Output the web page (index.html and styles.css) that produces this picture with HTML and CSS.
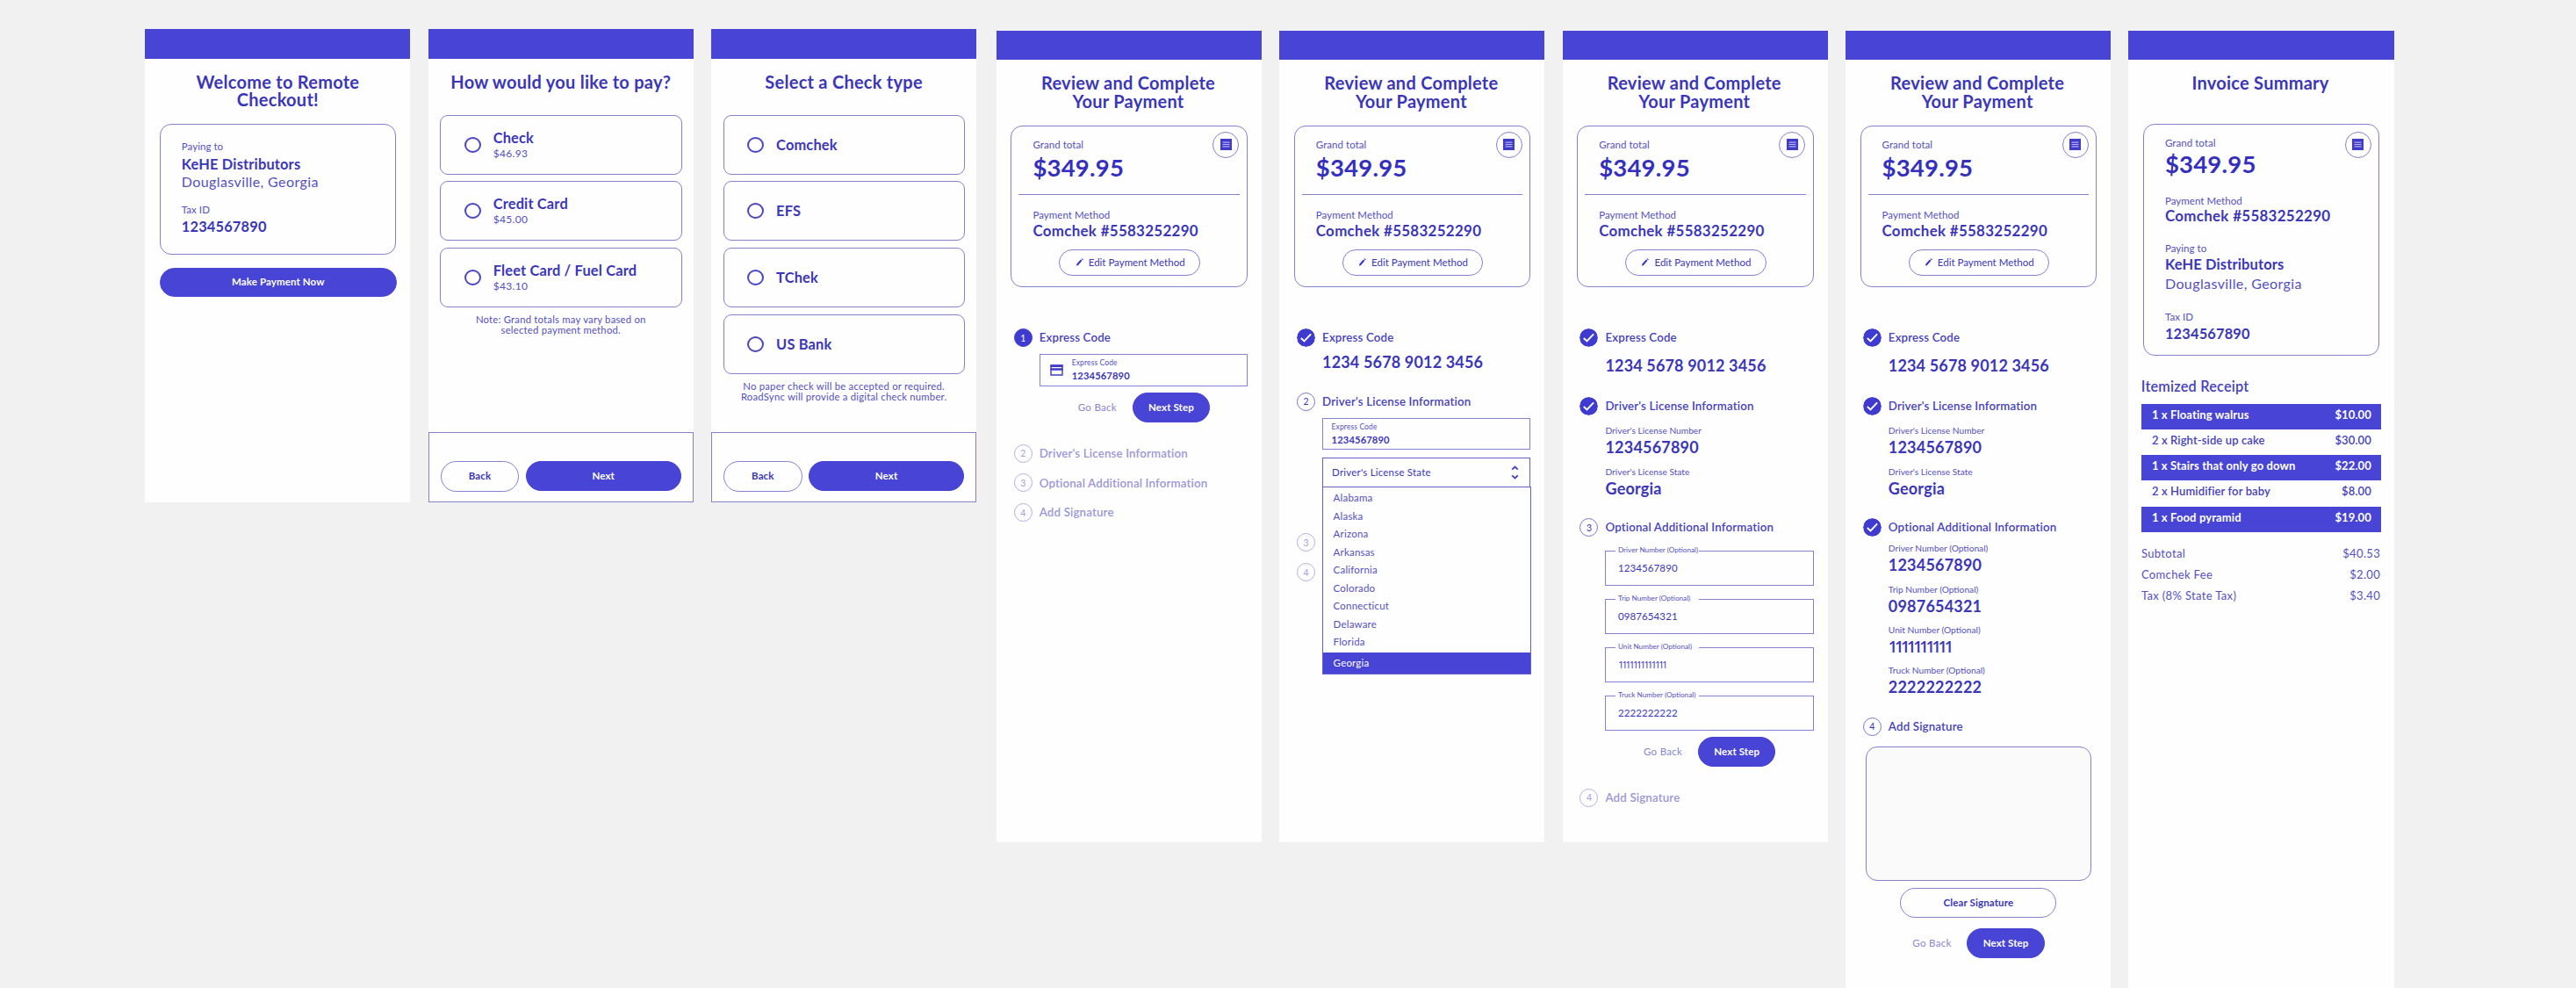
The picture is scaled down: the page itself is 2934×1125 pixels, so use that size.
FILE: index.html
```html
<!DOCTYPE html>
<html lang="en">
<head>
<meta charset="utf-8">
<title>Remote Checkout</title>
<link rel="stylesheet" href="styles.css">
</head>
<body>
<svg class="defs" aria-hidden="true">
  <symbol id="i-check" viewBox="0 0 21 21"><circle cx="10.5" cy="10.5" r="10.5" fill="#403bd0"/><path d="M4.800 11l3.700 3.500 7.600-8.200" fill="none" stroke="#fff" stroke-width="1.900"/></symbol>
  <symbol id="i-receipt" viewBox="0 0 13 13"><path d="M0 0h13v13H0z" fill="#403bc8"/><path d="M2.500 4.200h8M2.500 6.500h8M2.500 8.800h8" stroke="#b4b0ee" stroke-width="1.200"/></symbol>
  <symbol id="i-pencil" viewBox="0 0 9 10"><path d="M0 9.800l.5-2.500 5-5.800L7.300 3l-5 5.900zM6.100.9l.8-.8L9 1.700l-.9.900z" fill="#3a35c4"/></symbol>
  <symbol id="i-card" viewBox="0 0 15 13"><path d="M1 1h13v11H1z" fill="none" stroke="#403bc8" stroke-width="1.400"/><path d="M.5.500h14V3H.5zM.5 4.200h14v2.600H.5z" fill="#403bc8"/></symbol>
  <symbol id="i-sort" viewBox="0 0 9 16"><path d="M1.200 4.600l3.300-3 3.300 3M1.200 11.400l3.300 3 3.300-3" fill="none" stroke="#4540c4" stroke-width="1.900"/></symbol>
</svg>
<main class="board">

  <section class="screen short">
    <div class="bar"></div>
    <h1 class="title">Welcome to Remote<br>Checkout!</h1>
    <div class="card payee">
      <p class="label">Paying to</p>
      <p class="value name">KeHE Distributors</p>
      <p class="value place">Douglasville, Georgia</p>
      <p class="label tax">Tax ID</p>
      <p class="value taxno">1234567890</p>
    </div>
    <button class="btn solid wide">Make Payment Now</button>
  </section>

  <section class="screen short">
    <div class="bar"></div>
    <h1 class="title">How would you like to pay?</h1>
    <div class="options">
      <div class="option"><i class="radio"></i><div><p class="value">Check</p><p class="price">$46.93</p></div></div>
      <div class="option"><i class="radio"></i><div><p class="value">Credit Card</p><p class="price">$45.00</p></div></div>
      <div class="option"><i class="radio"></i><div><p class="value">Fleet Card / Fuel Card</p><p class="price">$43.10</p></div></div>
    </div>
    <p class="note">Note: Grand totals may vary based on<br>selected payment method.</p>
    <div class="footer"><button class="btn line back">Back</button><button class="btn solid next">Next</button></div>
  </section>

  <section class="screen short">
    <div class="bar"></div>
    <h1 class="title">Select a Check type</h1>
    <div class="options">
      <div class="option"><i class="radio"></i><p class="value">Comchek</p></div>
      <div class="option"><i class="radio"></i><p class="value">EFS</p></div>
      <div class="option"><i class="radio"></i><p class="value">TChek</p></div>
      <div class="option"><i class="radio"></i><p class="value">US Bank</p></div>
    </div>
    <p class="note">No paper check will be accepted or required.<br>RoadSync will provide a digital check number.</p>
    <div class="footer"><button class="btn line back">Back</button><button class="btn solid next">Next</button></div>
  </section>

  <section class="screen mid first">
    <div class="bar"></div>
    <h1 class="title">Review and Complete<br>Your Payment</h1>
    <div class="card total">
      <span class="receipt"><svg><use href="#i-receipt"/></svg></span>
      <p class="label">Grand total</p>
      <p class="amount">$349.95</p>
      <hr>
      <p class="label">Payment Method</p>
      <p class="value method">Comchek #5583252290</p>
      <button class="btn line edit"><svg><use href="#i-pencil"/></svg>Edit Payment Method</button>
    </div>
    <div class="steps">
      <div class="step"><b class="num on">1</b><h2>Express Code</h2></div>
      <div class="body">
        <div class="field icon"><svg><use href="#i-card"/></svg><div><p class="tiny">Express Code</p><p class="entry">1234567890</p></div></div>
      </div>
      <div class="actions"><a class="goback">Go Back</a><button class="btn solid go">Next Step</button></div>
      <div class="step idle after"><b class="num">2</b><h2>Driver's License Information</h2></div>
      <div class="step idle"><b class="num">3</b><h2>Optional Additional Information</h2></div>
      <div class="step idle"><b class="num">4</b><h2>Add Signature</h2></div>
    </div>
  </section>

  <section class="screen mid">
    <div class="bar"></div>
    <h1 class="title">Review and Complete<br>Your Payment</h1>
    <div class="card total">
      <span class="receipt"><svg><use href="#i-receipt"/></svg></span>
      <p class="label">Grand total</p>
      <p class="amount">$349.95</p>
      <hr>
      <p class="label">Payment Method</p>
      <p class="value method">Comchek #5583252290</p>
      <button class="btn line edit"><svg><use href="#i-pencil"/></svg>Edit Payment Method</button>
    </div>
    <div class="steps">
      <div class="step"><svg class="num done"><use href="#i-check"/></svg><h2>Express Code</h2></div>
      <p class="code near">1234 5678 9012 3456</p>
      <div class="step second"><b class="num">2</b><h2>Driver's License Information</h2></div>
      <div class="body">
        <div class="field"><div><p class="tiny">Express Code</p><p class="entry">1234567890</p></div></div>
        <div class="select">
          <span>Driver's License State</span><svg><use href="#i-sort"/></svg>
          <ul class="menu">
            <li>Alabama</li><li>Alaska</li><li>Arizona</li><li>Arkansas</li><li>California</li><li>Colorado</li><li>Connecticut</li><li>Delaware</li><li>Florida</li><li class="picked">Georgia</li>
          </ul>
        </div>
      </div>
      <div class="step idle beneath"><b class="num">3</b></div>
      <div class="step idle"><b class="num">4</b></div>
    </div>
  </section>

  <section class="screen mid">
    <div class="bar"></div>
    <h1 class="title">Review and Complete<br>Your Payment</h1>
    <div class="card total">
      <span class="receipt"><svg><use href="#i-receipt"/></svg></span>
      <p class="label">Grand total</p>
      <p class="amount">$349.95</p>
      <hr>
      <p class="label">Payment Method</p>
      <p class="value method">Comchek #5583252290</p>
      <button class="btn line edit"><svg><use href="#i-pencil"/></svg>Edit Payment Method</button>
    </div>
    <div class="steps">
      <div class="step"><svg class="num done"><use href="#i-check"/></svg><h2>Express Code</h2></div>
      <p class="code">1234 5678 9012 3456</p>
      <div class="step third"><svg class="num done"><use href="#i-check"/></svg><h2>Driver's License Information</h2></div>
      <dl class="facts">
        <dt>Driver's License Number</dt><dd>1234567890</dd>
        <dt>Driver's License State</dt><dd>Georgia</dd>
      </dl>
      <div class="step third"><b class="num">3</b><h2>Optional Additional Information</h2></div>
      <div class="outlined">
        <div class="box"><span class="legend">Driver Number (Optional)</span><p>1234567890</p></div>
        <div class="box"><span class="legend">Trip Number (Optional)</span><p>0987654321</p></div>
        <div class="box"><span class="legend">Unit Number (Optional)</span><p class="ones">1111111111111</p></div>
        <div class="box"><span class="legend">Truck Number (Optional)</span><p>2222222222</p></div>
      </div>
      <div class="actions left"><a class="goback">Go Back</a><button class="btn solid go">Next Step</button></div>
      <div class="step idle after"><b class="num">4</b><h2>Add Signature</h2></div>
    </div>
  </section>

  <section class="screen tall">
    <div class="bar"></div>
    <h1 class="title">Review and Complete<br>Your Payment</h1>
    <div class="card total">
      <span class="receipt"><svg><use href="#i-receipt"/></svg></span>
      <p class="label">Grand total</p>
      <p class="amount">$349.95</p>
      <hr>
      <p class="label">Payment Method</p>
      <p class="value method">Comchek #5583252290</p>
      <button class="btn line edit"><svg><use href="#i-pencil"/></svg>Edit Payment Method</button>
    </div>
    <div class="steps">
      <div class="step"><svg class="num done"><use href="#i-check"/></svg><h2>Express Code</h2></div>
      <p class="code">1234 5678 9012 3456</p>
      <div class="step third"><svg class="num done"><use href="#i-check"/></svg><h2>Driver's License Information</h2></div>
      <dl class="facts">
        <dt>Driver's License Number</dt><dd>1234567890</dd>
        <dt>Driver's License State</dt><dd>Georgia</dd>
      </dl>
      <div class="step third"><svg class="num done"><use href="#i-check"/></svg><h2>Optional Additional Information</h2></div>
      <dl class="facts tight">
        <dt>Driver Number (Optional)</dt><dd>1234567890</dd>
        <dt>Trip Number (Optional)</dt><dd>0987654321</dd>
        <dt>Unit Number (Optional)</dt><dd class="ones">1111111111</dd>
        <dt>Truck Number (Optional)</dt><dd>2222222222</dd>
      </dl>
      <div class="step third"><b class="num">4</b><h2>Add Signature</h2></div>
      <div class="pad"></div>
      <button class="btn line clear">Clear Signature</button>
      <div class="actions last"><a class="goback">Go Back</a><button class="btn solid go">Next Step</button></div>
    </div>
  </section>

  <section class="screen tall">
    <div class="bar"></div>
    <h1 class="title">Invoice Summary</h1>
    <div class="card invoice">
      <span class="receipt"><svg><use href="#i-receipt"/></svg></span>
      <p class="label">Grand total</p>
      <p class="amount">$349.95</p>
      <p class="label">Payment Method</p>
      <p class="value method">Comchek #5583252290</p>
      <p class="label">Paying to</p>
      <p class="value name">KeHE Distributors</p>
      <p class="value place">Douglasville, Georgia</p>
      <p class="label tax">Tax ID</p>
      <p class="value taxno">1234567890</p>
    </div>
    <h3 class="subhead">Itemized Receipt</h3>
    <ul class="items">
      <li><span>1 x Floating walrus</span><span>$10.00</span></li>
      <li><span>2 x Right-side up cake</span><span>$30.00</span></li>
      <li><span>1 x Stairs that only go down</span><span>$22.00</span></li>
      <li><span>2 x Humidifier for baby</span><span>$8.00</span></li>
      <li><span>1 x Food pyramid</span><span>$19.00</span></li>
    </ul>
    <ul class="sums">
      <li><span>Subtotal</span><span>$40.53</span></li>
      <li><span>Comchek Fee</span><span>$2.00</span></li>
      <li><span>Tax (8% State Tax)</span><span>$3.40</span></li>
    </ul>
  </section>

</main>
</body>
</html>
```
FILE: styles.css
```css
:root {
  --brand: #4744d6;
  --ink: #3b36b8;
  --soft: #5550c0;
  --edge: #8580cf;
}
* { box-sizing: border-box; margin: 0; padding: 0; }
body {
  height: 1125px;
  overflow: hidden;
  background: #f1f1f1;
  color: var(--ink);
  font-family: Lato, "Open Sans", sans-serif;
}
ul { list-style: none; }
button { font-family: inherit; }
svg { display: block; flex: none; }
.defs { position: absolute; width: 0; height: 0; }

.board {
  display: flex;
  align-items: flex-start;
  gap: 20.2px;
  padding: 33px 0 0 165.3px;
}
.screen {
  display: flex;
  flex-direction: column;
  flex: none;
  width: 302.2px;
  background: #fefefe;
}
.short { height: 539px; }
.mid { height: 924.5px; margin-top: 1.5px; }
.tall { height: 1090.5px; margin-top: 1.5px; }
.first { margin-left: 2.500px; }
.mid .title, .tall .title { margin-left: -2px; }
.bar { flex: none; height: 33.7px; background: var(--brand); }

.title {
  min-height: 40.6px;
  margin: 16.300px 0 0;
  font-size: 20px;
  line-height: 20.3px;
  font-weight: 700;
  letter-spacing: .26px;
  text-align: center;
}

/* text styles */
.label { font-size: 11.5px; line-height: 16px; letter-spacing: .05px; color: var(--soft); }
.value { font-size: 16.4px; line-height: 20px; font-weight: 700; letter-spacing: .17px; white-space: nowrap; }
.place { font-size: 16px; font-weight: 400; letter-spacing: .4px; color: var(--soft); }
.method { font-size: 16.9px; letter-spacing: .32px; }
.amount { font-size: 27.500px; line-height: 30px; font-weight: 700; letter-spacing: .2px; color: #342fbe; }

/* buttons */
.btn {
  display: flex;
  align-items: center;
  justify-content: center;
  flex: none;
  border: 1.5px solid var(--edge);
  border-radius: 18px;
  background: #fefefe;
  color: var(--ink);
  font-size: 11.500px;
  font-weight: 700;
  letter-spacing: .12px;
  padding-bottom: 1px;
}
.solid { background: var(--brand); border-color: var(--brand); color: #fff; }
.wide { width: 270px; height: 33px; margin: 14.500px 0 0 16.500px; }
.footer {
  display: flex;
  gap: 7.500px;
  height: 80px;
  margin-top: auto;
  padding: 32px 12.500px 0 13px;
  border: 1.5px solid var(--edge);
}
.back { width: 89.500px; height: 34.500px; }
.next { width: 177px; height: 34px; }

/* cards */
.card {
  position: relative;
  flex: none;
  width: 269.500px;
  margin-left: 16.500px;
  padding-left: 24px;
  border: 1.5px solid var(--edge);
  border-radius: 13px;
}
.payee { height: 149.500px; margin-top: 17px; padding-top: 17.500px; }
.payee .name { margin-top: 2px; }
.payee .tax { margin-top: 13.500px; }
.payee .taxno { margin-top: 1px; }

.total { height: 184.800px; margin-top: 17.500px; padding-top: 13px; }
.total .amount { margin-top: 3.500px; }
.total hr { width: 251.500px; height: 1.500px; margin: 14.500px 0 14.500px -16px; border: 0; background: var(--edge); }
.edit { width: 160.500px; height: 30px; margin: 11.500px 0 0 30px; gap: 6px; padding-left: 2px; font-weight: 400; letter-spacing: 0; }
.edit svg { width: 8px; height: 9px; }
.receipt {
  position: absolute;
  top: 6px;
  right: 8.500px;
  display: grid;
  place-items: center;
  width: 30px;
  height: 30px;
  border: 1.5px solid var(--edge);
  border-radius: 50%;
}
.receipt svg { width: 13px; height: 13px; }

.invoice { height: 264px; margin-top: 16px; padding-top: 12.500px; }
.invoice .receipt { top: 7.500px; }
.invoice .amount { margin: 1px 0 19.500px; }
.invoice .method { margin: -1.500px 0 19px; }
.invoice .name { margin: .5px 0 1.500px; }
.invoice .tax { margin-top: 20px; }
.invoice .taxno { margin-top: 1px; }

/* payment choices */
.options { display: grid; gap: 7.700px; margin: 7.300px 13px 0 13.500px; }
.option {
  display: flex;
  align-items: center;
  gap: 14px;
  height: 67.900px;
  padding-left: 26.500px;
  border: 1.5px solid var(--edge);
  border-radius: 9px;
}
.radio { width: 19px; height: 18px; border: 2px solid #4a45c4; border-radius: 50%; }
.price { font-size: 12px; line-height: 16px; letter-spacing: .35px; color: var(--soft); }
.note { margin-top: 8px; font-size: 11.3px; line-height: 12px; letter-spacing: .22px; text-align: center; color: var(--soft); white-space: nowrap; }

/* checkout steps */
.steps { padding: 46.700px 16px 0 19.800px; }
.step { display: flex; align-items: center; gap: 8px; height: 21px; }
.step h2 { font-size: 13.3px; line-height: 18px; padding-bottom: .5px; font-weight: 600; letter-spacing: .16px; color: #4641bc; white-space: nowrap; }
.num {
  flex: none;
  display: grid;
  place-items: center;
  width: 21px;
  height: 21px;
  border: 1.4px solid #7a75cb;
  border-radius: 50%;
  font-size: 10.500px;
  font-weight: 400;
}
.on { background: #403bd0; border-color: #403bd0; color: #fff; }
.done { border: 0; }
.idle { margin-top: 12.800px; }
.idle h2 { color: #9a96d8; }
.idle .num { border-color: #b3b0e2; color: #a4a0dc; }
.after { margin-top: 24.800px; }
.second { margin-top: 22.500px; }
.third { margin-top: 23.500px; }
.beneath { margin-top: 51.800px; }
.body { margin: 8.100px 0 0 29px; }
.field {
  display: flex;
  align-items: center;
  height: 36.500px;
  padding-left: 9.500px;
  border: 1.5px solid var(--edge);
}
.icon { padding-left: 11px; gap: 10px; }
.icon svg { width: 15px; height: 13px; }
.tiny { font-size: 8.5px; line-height: 13px; letter-spacing: .12px; color: var(--soft); }
.entry { font-size: 11.2px; line-height: 15px; font-weight: 700; letter-spacing: .12px; }
.actions { display: flex; align-items: center; margin-top: 7.500px; padding-left: 73px; }
.goback { width: 62px; padding-bottom: 1px; font-size: 11.5px; letter-spacing: .3px; color: #8a86d0; }
.go { width: 88.500px; height: 33.600px; }

.select {
  position: relative;
  display: flex;
  align-items: center;
  justify-content: space-between;
  height: 35px;
  margin-top: 8.200px;
  padding: 0 12px 1px 10px;
  border: 1.5px solid #6560c8;
  font-size: 11.500px;
  letter-spacing: .2px;
}
.select svg { width: 9px; height: 16px; }
.menu {
  position: absolute;
  top: 32.500px;
  left: -1.500px;
  right: -1.500px;
  padding-top: 2px;
  border: 1.5px solid #6560c8;
  background: #fefefe;
  color: var(--soft);
}
.menu li { height: 20.500px; padding-left: 12px; line-height: 20.500px; }
.menu .picked { height: 24px; margin-top: 1.500px; line-height: 23px; background: var(--brand); color: #fff; }

.code { margin: 9.300px 0 0 29px; font-size: 18px; line-height: 24px; font-weight: 700; letter-spacing: .15px; }
.near { margin-top: 5.300px; }
.facts { display: flex; flex-direction: column; margin: 10.200px 0 0 29px; }
.facts dt { font-size: 10.2px; line-height: 14px; color: var(--soft); }
.facts dd { margin: 1.200px 0 9.300px; font-size: 18px; line-height: 22px; font-weight: 700; letter-spacing: .2px; }
.facts dd:last-child { margin-bottom: 0; }
.tight { margin-top: 6px; }
.tight dd { margin-bottom: 9.100px; }
.facts .ones { font-family: "Open Sans", sans-serif; letter-spacing: -3.2px; font-weight: 600; }

.outlined { display: grid; gap: 14.800px; margin: 16.200px 0 0 29px; }
.box { position: relative; height: 40px; padding-left: 13.500px; border: 1.5px solid var(--edge); }
.box p { font-size: 11.500px; line-height: 37px; letter-spacing: .1px; }
.box .ones { font-family: "Open Sans", sans-serif; letter-spacing: -2.400px; }
.legend {
  position: absolute;
  top: -8px;
  left: 11px;
  width: 95px;
  padding-left: 2.500px;
  background: #fefefe;
  font-size: 8.2px;
  line-height: 12px;
  color: var(--soft);
  white-space: nowrap;
}
.left { padding-left: 72.500px; }

.pad { width: 257.500px; height: 153.600px; margin: 12px 0 0 2.800px; border: 1.5px solid var(--edge); border-radius: 13px; background: #fafafa; }
.clear { width: 178px; height: 34px; margin: 8px 0 0 42.500px; }
.last { margin-top: 12px; padding-left: 56.500px; }

/* invoice */
.subhead { margin: 22.500px 0 0 14.300px; font-size: 16.3px; line-height: 24px; font-weight: 600; letter-spacing: .2px; color: #4641bc; }
.items { margin: 8px 14.700px 0 14.500px; font-size: 13px; font-weight: 700; letter-spacing: .12px; }
.items li, .sums li { display: flex; justify-content: space-between; }
.items li { height: 29.300px; padding: 0 11px 0 12px; line-height: 25.500px; color: #4641bc; }
.items li:nth-child(even) { font-weight: 600; }
.items li:nth-child(odd) { background: var(--brand); color: #fff; }
.sums { margin: 11.500px 15.500px 0 14.500px; font-size: 13px; line-height: 24.400px; letter-spacing: .35px; color: var(--soft); }
```
